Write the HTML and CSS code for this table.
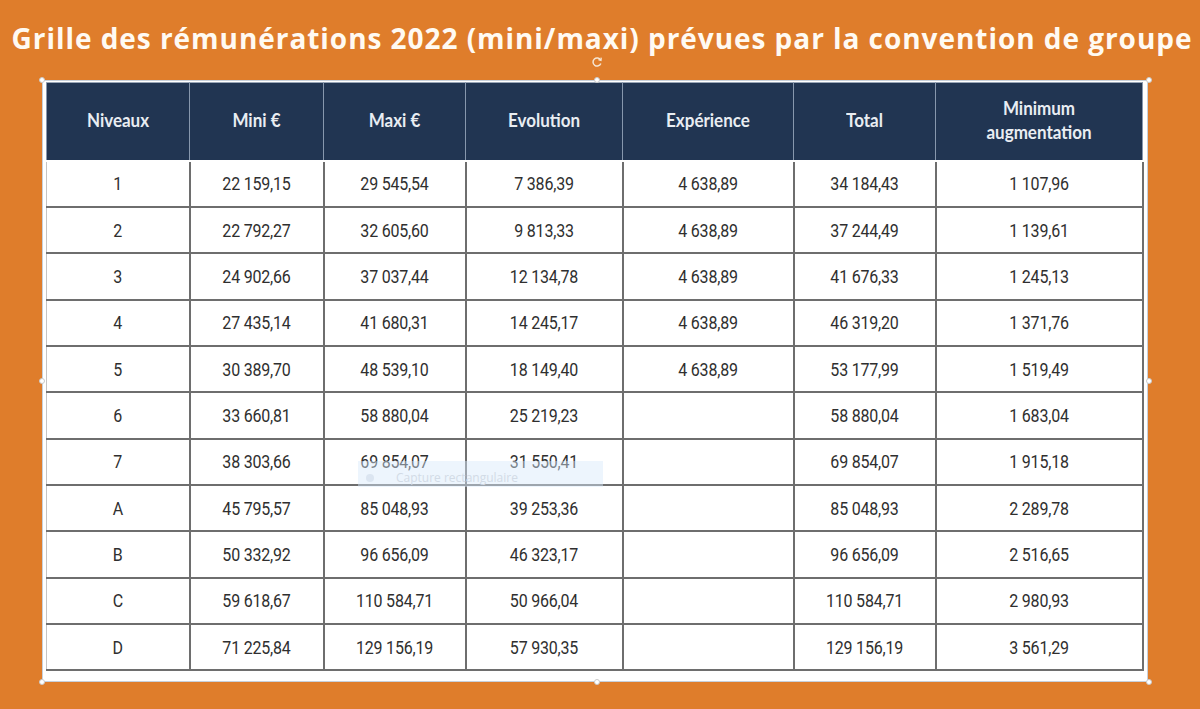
FILE: index.html
```html
<!DOCTYPE html>
<html lang="fr">
<head>
<meta charset="utf-8">
<title>Grille des rémunérations 2022</title>
<link rel="stylesheet" href="styles.css">
</head>
<body>
<div class="page">
  <h1 class="title">Grille des rémunérations 2022 (mini/maxi) prévues par la convention de groupe</h1>
  <div class="frame">
    <table class="grid">
      <colgroup>
        <col class="c1"><col class="c2"><col class="c3"><col class="c4"><col class="c5"><col class="c6"><col class="c7">
      </colgroup>
      <thead>
        <tr class="head">
          <th><span class="h">Niveaux</span></th>
          <th><span class="h">Mini €</span></th>
          <th><span class="h">Maxi €</span></th>
          <th><span class="h">Evolution</span></th>
          <th><span class="h">Expérience</span></th>
          <th><span class="h">Total</span></th>
          <th><span class="h">Minimum<br>augmentation</span></th>
        </tr>
      </thead>
      <tbody>
        <tr><td><span class="v">1</span></td><td><span class="v">22 159,15</span></td><td><span class="v">29 545,54</span></td><td><span class="v">7 386,39</span></td><td><span class="v">4 638,89</span></td><td><span class="v">34 184,43</span></td><td><span class="v">1 107,96</span></td></tr>
        <tr><td><span class="v">2</span></td><td><span class="v">22 792,27</span></td><td><span class="v">32 605,60</span></td><td><span class="v">9 813,33</span></td><td><span class="v">4 638,89</span></td><td><span class="v">37 244,49</span></td><td><span class="v">1 139,61</span></td></tr>
        <tr><td><span class="v">3</span></td><td><span class="v">24 902,66</span></td><td><span class="v">37 037,44</span></td><td><span class="v">12 134,78</span></td><td><span class="v">4 638,89</span></td><td><span class="v">41 676,33</span></td><td><span class="v">1 245,13</span></td></tr>
        <tr><td><span class="v">4</span></td><td><span class="v">27 435,14</span></td><td><span class="v">41 680,31</span></td><td><span class="v">14 245,17</span></td><td><span class="v">4 638,89</span></td><td><span class="v">46 319,20</span></td><td><span class="v">1 371,76</span></td></tr>
        <tr><td><span class="v">5</span></td><td><span class="v">30 389,70</span></td><td><span class="v">48 539,10</span></td><td><span class="v">18 149,40</span></td><td><span class="v">4 638,89</span></td><td><span class="v">53 177,99</span></td><td><span class="v">1 519,49</span></td></tr>
        <tr><td><span class="v">6</span></td><td><span class="v">33 660,81</span></td><td><span class="v">58 880,04</span></td><td><span class="v">25 219,23</span></td><td></td><td><span class="v">58 880,04</span></td><td><span class="v">1 683,04</span></td></tr>
        <tr><td><span class="v">7</span></td><td><span class="v">38 303,66</span></td><td><span class="v">69 854,07</span></td><td><span class="v">31 550,41</span></td><td></td><td><span class="v">69 854,07</span></td><td><span class="v">1 915,18</span></td></tr>
        <tr><td><span class="v">A</span></td><td><span class="v">45 795,57</span></td><td><span class="v">85 048,93</span></td><td><span class="v">39 253,36</span></td><td></td><td><span class="v">85 048,93</span></td><td><span class="v">2 289,78</span></td></tr>
        <tr><td><span class="v">B</span></td><td><span class="v">50 332,92</span></td><td><span class="v">96 656,09</span></td><td><span class="v">46 323,17</span></td><td></td><td><span class="v">96 656,09</span></td><td><span class="v">2 516,65</span></td></tr>
        <tr><td><span class="v">C</span></td><td><span class="v">59 618,67</span></td><td><span class="v">110 584,71</span></td><td><span class="v">50 966,04</span></td><td></td><td><span class="v">110 584,71</span></td><td><span class="v">2 980,93</span></td></tr>
        <tr><td><span class="v">D</span></td><td><span class="v">71 225,84</span></td><td><span class="v">129 156,19</span></td><td><span class="v">57 930,35</span></td><td></td><td><span class="v">129 156,19</span></td><td><span class="v">3 561,29</span></td></tr>
      </tbody>
    </table>

    <div class="capture"><span class="capture-dot"></span><span class="capture-text">Capture rectangulaire</span></div>

    <svg class="rotate" width="12" height="12" viewBox="0 0 12 12" aria-hidden="true">
      <path d="M9.6 4.2 A4 4 0 1 0 9.8 7.4" fill="none" stroke="#f6e6d2" stroke-width="1.5"/>
      <path d="M7.4 3.6 L10 4.4 L10.2 1.6" fill="none" stroke="#f6e6d2" stroke-width="1.3"/>
    </svg>
    <span class="handle tl"></span>
    <span class="handle tm"></span>
    <span class="handle tr"></span>
    <span class="handle ml"></span>
    <span class="handle mr"></span>
    <span class="handle bl"></span>
    <span class="handle bm"></span>
    <span class="handle br"></span>
  </div>
</div>
</body>
</html>
```

FILE: styles.css
```css
* {
  box-sizing: border-box;
}

html, body {
  margin: 0;
  padding: 0;
}

body {
  background: #df7d2b;
  width: 1200px;
  height: 709px;
  overflow: hidden;
  font-family: Roboto, "Liberation Sans", sans-serif;
}

.page {
  display: flex;
  flex-direction: column;
}

.title {
  margin: 0;
  height: 80px;
  padding-top: 24px;
  font-family: "Open Sans", Lato, sans-serif;
  font-weight: 700;
  font-size: 28px;
  line-height: 1;
  letter-spacing: 0.95px;
  font-variant-ligatures: none;
  color: #fffaf2;
  text-align: center;
  white-space: nowrap;
  padding-left: 4px;
}

.frame {
  position: relative;
  margin-left: 42px;
  width: 1106px;
  height: 602px;
  background: #fff;
  border: 1px solid #c8d0da;
  padding: 1px 5px 10px 3px;
}

.grid {
  width: 1096px;
  border-collapse: collapse;
  table-layout: fixed;
}

.c1 { width: 143px; }
.c2 { width: 134px; }
.c3 { width: 142px; }
.c4 { width: 157px; }
.c5 { width: 171px; }
.c6 { width: 142px; }
.c7 { width: 207px; }

.head {
  height: 78px;
}

.head th {
  background: #213552;
  color: #e9edf2;
  font-family: Lato, "Open Sans", sans-serif;
  font-weight: 700;
  font-size: 17px;
  line-height: 23px;
  text-align: center;
  vertical-align: middle;
  padding: 0 4px 3px;
  border-left: 1px solid #8797ad;
  border-right: 1px solid #8797ad;
  border-top: 1px solid #9aa7b8;
  border-bottom: 2px solid #ffffff;
}

.h {
  display: inline-block;
  transform: scaleY(1.08);
}

.grid tbody tr {
  height: 46.36px;
}

.grid td {
  border: 2px solid #6e6e6e;
  color: #2f2f2f;
  font-size: 16px;
  text-align: center;
  vertical-align: middle;
  padding: 0 4px;
}

.grid td:first-child {
  border-left: 1px solid #c4c4c4;
}

.v {
  display: inline-block;
  transform: scaleY(1.18);
  letter-spacing: -0.2px;
}

.capture {
  position: absolute;
  left: 315px;
  top: 380px;
  width: 245px;
  height: 26px;
  background: rgba(214, 232, 250, 0.45);
  display: flex;
  align-items: center;
  gap: 22px;
  padding-left: 8px;
  padding-top: 7px;
}

.capture-dot {
  width: 8px;
  height: 8px;
  border-radius: 50%;
  background: #dbe5f1;
}

.capture-text {
  font-family: "Open Sans", sans-serif;
  font-size: 12px;
  line-height: 12px;
  color: #d2dbe6;
}

.rotate {
  position: absolute;
  left: 548px;
  top: -25px;
}

.handle {
  position: absolute;
  width: 6px;
  height: 6px;
  border-radius: 50%;
  background: #ffffff;
  border: 1px solid #c9c9c9;
}

.tl { left: -4px; top: -4px; }
.tm { left: 551px; top: -4px; }
.tr { right: -5px; top: -4px; }
.ml { left: -4px; top: 297px; }
.mr { right: -5px; top: 297px; }
.bl { left: -4px; bottom: -4px; }
.bm { left: 551px; bottom: -4px; }
.br { right: -5px; bottom: -4px; }
```
